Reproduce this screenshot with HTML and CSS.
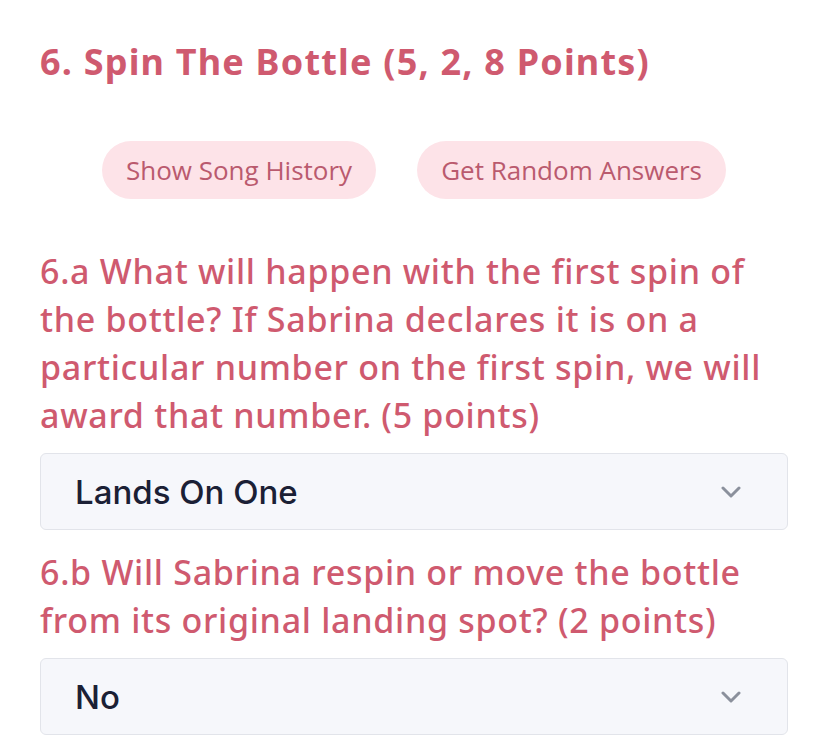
FILE: index.html
```html
<!DOCTYPE html>
<html>
<head>
    <meta charset="UTF-8">
    <title>Spin The Bottle</title>
    <link rel="stylesheet" href="styles.css">
</head>
<body>
    <div class="container">
        <h2 class="section-title">6. Spin The Bottle (5, 2, 8 Points)</h2>

        <div class="actions">
            <button type="button" class="pill">Show Song History</button>
            <button type="button" class="pill">Get Random Answers</button>
        </div>

        <div class="question">
            <p class="question-text">6.a What will happen with the first spin of the bottle? If Sabrina declares it is on a particular number on the first spin, we will award that number. (5 points)</p>
            <div class="select">
                <span class="select-value">Lands On One</span>
                <svg class="chevron" width="20" height="12" viewBox="0 0 20 12">
                    <path d="M2 2 L10 10 L18 2" fill="none" stroke="#8b909c" stroke-width="3" stroke-linecap="round" stroke-linejoin="round"/>
                </svg>
            </div>
        </div>

        <div class="question">
            <p class="question-text">6.b Will Sabrina respin or move the bottle from its original landing spot? (2 points)</p>
            <div class="select">
                <span class="select-value">No</span>
                <svg class="chevron" width="20" height="12" viewBox="0 0 20 12">
                    <path d="M2 2 L10 10 L18 2" fill="none" stroke="#8b909c" stroke-width="3" stroke-linecap="round" stroke-linejoin="round"/>
                </svg>
            </div>
        </div>
    </div>
</body>
</html>
```

FILE: styles.css
```css
body {
    background-color: #FFFFFF;
    margin: 0;
    padding: 0;
}

.container {
    padding: 38px 40px 0 40px;
}

.section-title {
    margin: 0;
    color: #CF5A6F;
    font-family: "Noto Sans", sans-serif;
    font-weight: 700;
    font-size: 36px;
    line-height: 48px;
    letter-spacing: 1.2px;
}

.actions {
    display: flex;
    justify-content: center;
    gap: 41px;
    margin-top: 55px;
}

.pill {
    height: 58px;
    padding: 0 24px;
    background-color: #FDE3E8;
    color: #BA5A6E;
    font-family: "Open Sans", sans-serif;
    font-size: 26px;
    border: none;
    border-radius: 29px;
    cursor: pointer;
}

.question {
    margin-top: 48px;
}

.question + .question {
    margin-top: 18px;
}

.question-text {
    margin: 0 0 14px 0;
    color: #CF5A6F;
    font-family: "Noto Sans", sans-serif;
    font-weight: 500;
    font-size: 34px;
    line-height: 48px;
    letter-spacing: 0.7px;
}

.select {
    display: flex;
    align-items: center;
    justify-content: space-between;
    height: 75px;
    padding: 0 46px 0 34px;
    background-color: #F6F7FB;
    border: 1px solid #E2E4EA;
    border-radius: 6px;
}

.select-value {
    color: #1B2035;
    font-family: "Inter", sans-serif;
    font-weight: 500;
    font-size: 33px;
}
```
